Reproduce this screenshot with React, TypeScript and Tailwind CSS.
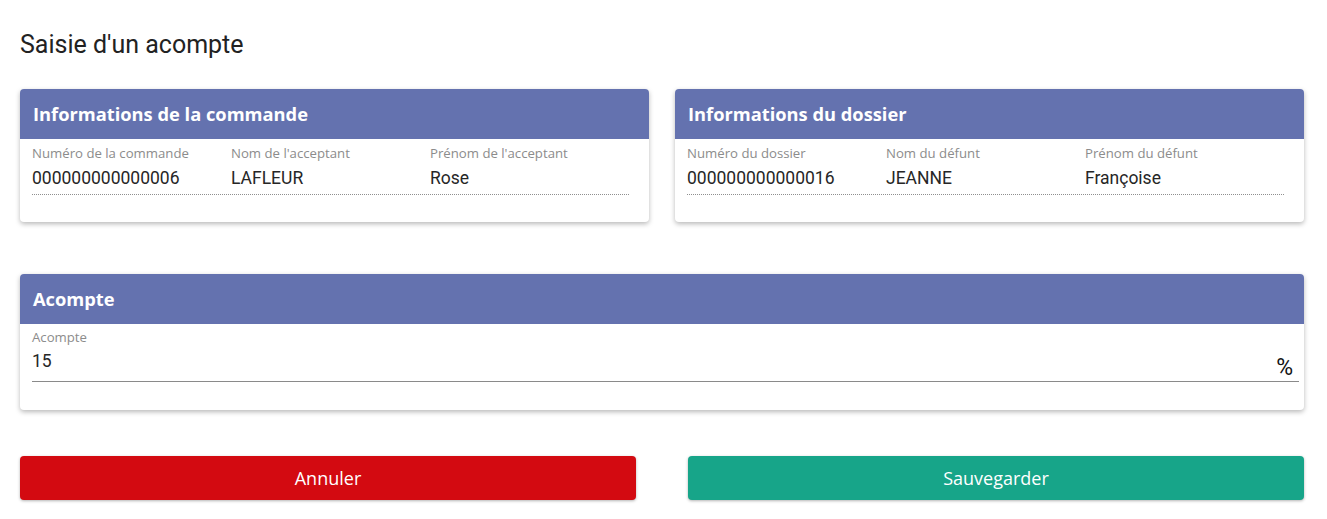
import React from 'react';

interface Field {
  label: string;
  value: string;
}

const commande: Field[] = [
  { label: 'Numéro de la commande', value: '000000000000006' },
  { label: "Nom de l'acceptant", value: 'LAFLEUR' },
  { label: "Prénom de l'acceptant", value: 'Rose' },
];

const dossier: Field[] = [
  { label: 'Numéro du dossier', value: '000000000000016' },
  { label: 'Nom du défunt', value: 'JEANNE' },
  { label: 'Prénom du défunt', value: 'Françoise' },
];

function CardHeader({ title }: { title: string }) {
  return (
    <div className="h-[50px] bg-[#6472af] rounded-t-[4px] flex items-center px-[13px]">
      <h2 className="text-white text-[18.3px] font-bold [font-family:'Open_Sans',sans-serif]">
        {title}
      </h2>
    </div>
  );
}

function InfoCard({ title, fields }: { title: string; fields: Field[] }) {
  return (
    <div className="flex-1 bg-white rounded-[4px] shadow-[0_2px_5px_rgba(0,0,0,0.28)]">
      <CardHeader title={title} />
      <div className="pl-3 pr-5 pt-[6px] pb-[27px]">
        <div className="grid grid-cols-3 border-b border-dotted border-[#8f8f8f] pb-[5px]">
          {fields.map((f) => (
            <div key={f.label} className="flex flex-col">
              <span className="text-[13.2px] leading-[16px] text-[#8c8c8c] [font-family:'Open_Sans',sans-serif]">
                {f.label}
              </span>
              <span className="text-[17.5px] leading-[22px] mt-[6px] text-[#262626] [font-family:Roboto,sans-serif]">
                {f.value}
              </span>
            </div>
          ))}
        </div>
      </div>
    </div>
  );
}

export default function App() {
  return (
    <div className="min-h-[519px] bg-white pl-5 pr-[23px] pt-[29px] [font-family:Roboto,sans-serif]">
      <h1 className="text-[25px] leading-[32px] text-[#222] font-normal">Saisie d'un acompte</h1>

      <div className="flex gap-[26px] mt-[28px]">
        <InfoCard title="Informations de la commande" fields={commande} />
        <InfoCard title="Informations du dossier" fields={dossier} />
      </div>

      <div className="mt-[52px] bg-white rounded-[4px] shadow-[0_2px_5px_rgba(0,0,0,0.28)]">
        <CardHeader title="Acompte" />
        <div className="pl-3 pr-[5px] pt-[5px] pb-[28px]">
          <div className="flex flex-col border-b border-[#8a8a8a]">
            <span className="text-[13.2px] leading-[16px] text-[#8c8c8c] [font-family:'Open_Sans',sans-serif]">
              Acompte
            </span>
            <div className="flex items-start justify-between mt-[5px] h-[31px]">
              <span className="text-[17.5px] leading-[22px] text-[#262626]">15</span>
              <span className="text-[23px] leading-none text-[#111] pr-[6px] mt-[6px]">%</span>
            </div>
          </div>
        </div>
      </div>

      <div className="flex justify-between mt-[46px]">
        <button className="w-[616px] h-[44px] rounded-[4px] bg-[#d30a11] text-white text-[18px] shadow-[0_1px_3px_rgba(0,0,0,0.3)] [font-family:'Open_Sans',sans-serif]">
          Annuler
        </button>
        <button className="w-[616px] h-[44px] rounded-[4px] bg-[#17a589] text-white text-[18px] shadow-[0_1px_3px_rgba(0,0,0,0.3)] [font-family:'Open_Sans',sans-serif]">
          Sauvegarder
        </button>
      </div>
    </div>
  );
}
